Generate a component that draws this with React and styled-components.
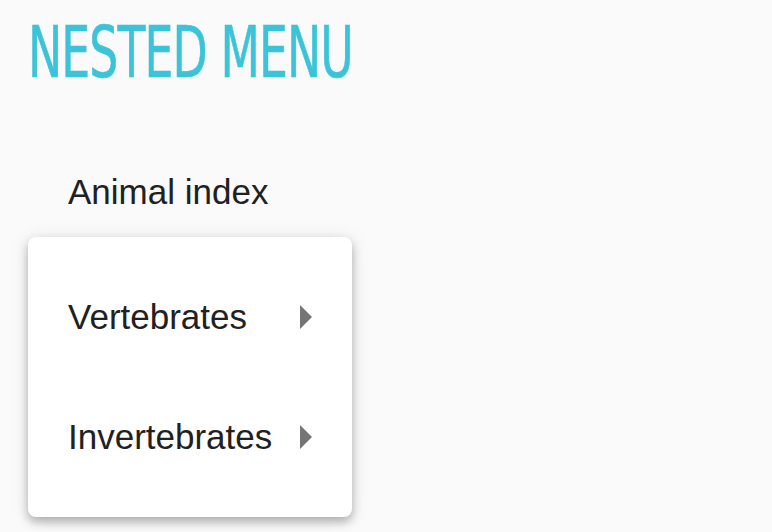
import React from "react";
import styled, { createGlobalStyle } from "styled-components";

const Global = createGlobalStyle`
  html, body { margin: 0; padding: 0; background: #fafafa; }
  body { font-family: "Liberation Sans", Arial, sans-serif; }
`;

const Page = styled.div`
  width: 772px;
  height: 532px;
  box-sizing: border-box;
  padding: 0 0 0 28px;
  overflow: hidden;
  display: flex;
  flex-direction: column;
`;

const Title = styled.h1`
  margin: 10px 0 0 0;
  font-family: "DejaVu Sans Condensed", "DejaVu Sans", sans-serif;
  font-weight: normal;
  font-size: 58px;
  line-height: 68px;
  color: #3bc4d9;
  -webkit-text-stroke: 0.5px #3bc4d9;
  letter-spacing: -1px;
  display: inline-block;
  transform-origin: left top;
  transform: scale(0.876, 1.24);
  white-space: nowrap;
`;

const Trigger = styled.div`
  margin: 94px 0 0 40px;
  font-size: 35px;
  line-height: 40px;
  color: #212121;
`;

const Menu = styled.div`
  margin-top: 25px;
  width: 324px;
  box-sizing: border-box;
  padding: 20px 0;
  background: #fff;
  border-radius: 8px;
  box-shadow: 0 5px 10px rgba(0, 0, 0, 0.26), 0 2px 18px rgba(0, 0, 0, 0.1);
  display: flex;
  flex-direction: column;
`;

const Item = styled.div`
  height: 120px;
  padding: 0 40px;
  display: flex;
  align-items: center;
  justify-content: space-between;
  font-size: 35px;
  color: #212121;
`;

const Arrow = styled.svg`
  width: 12px;
  height: 24px;
  flex: none;
`;

const Caret = () => (
  <Arrow viewBox="0 0 12 24">
    <path d="M0 0 L12 12 L0 24 Z" fill="#757575" />
  </Arrow>
);

export default function App() {
  return (
    <Page>
      <Global />
      <Title>NESTED MENU</Title>
      <Trigger>Animal index</Trigger>
      <Menu>
        <Item>
          <span>Vertebrates</span>
          <Caret />
        </Item>
        <Item>
          <span>Invertebrates</span>
          <Caret />
        </Item>
      </Menu>
    </Page>
  );
}
